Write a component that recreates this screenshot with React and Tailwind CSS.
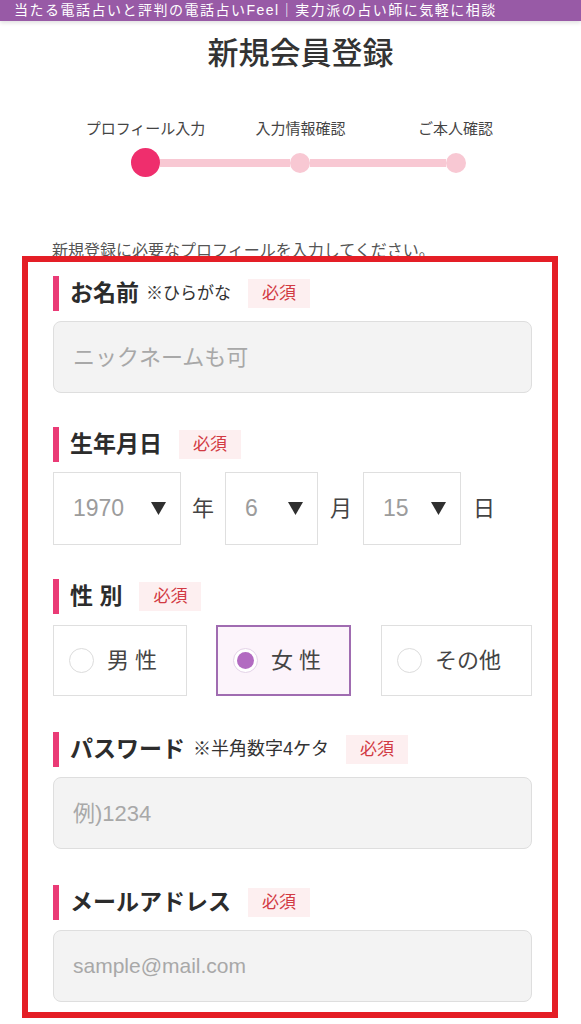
import React from "react";

function Badge() {
  return (
    <span className="ml-[17px] inline-flex h-[29px] items-center bg-[#fdeff0] px-[14px] text-[17px] text-[#d23a43]">
      必須
    </span>
  );
}

function Label({ title, sub, subClass = "text-[17px] ml-[7px]" }) {
  return (
    <div className="flex h-[35px] items-center">
      <div className="h-[35px] w-[6px] bg-[#ea3b76]" />
      <span className="ml-[11px] text-[23px] font-bold text-[#2c2c2c]">{title}</span>
      {sub && <span className={"text-[#333] " + subClass}>{sub}</span>}
      <Badge />
    </div>
  );
}

function TextBox({ placeholder, latin }) {
  return (
    <div className="mt-[10px] flex h-[72px] w-[479px] items-center rounded-[8px] border border-[#dedede] bg-[#f3f3f3] pl-[19px]">
      <span className={"text-[#a8a8a8] " + (latin ? "text-[21px]" : "text-[22px]")}>{placeholder}</span>
    </div>
  );
}

function Tri() {
  return (
    <svg width="15" height="13" viewBox="0 0 15 13">
      <polygon points="0,0 15,0 7.5,13" fill="#2f2f2f" />
    </svg>
  );
}

function Select({ value, w }) {
  return (
    <div className={"flex h-[73px] items-center justify-between border border-[#dfdfdf] bg-white pl-[19px] pr-[14px] " + w}>
      <span className="text-[23px] text-[#9c9c9c]">{value}</span>
      <Tri />
    </div>
  );
}

function Radio({ label, selected, w }) {
  return (
    <div
      className={
        "flex h-[71px] items-center pl-[15px] " +
        w +
        (selected ? " border-2 border-[#a06cb1] bg-[#fcf4fb]" : " border border-[#dfdfdf] bg-white")
      }
    >
      {selected ? (
        <div className="flex h-[25px] w-[25px] items-center justify-center rounded-full border border-[#e4d3e8] bg-white">
          <div className="h-[17px] w-[17px] rounded-full bg-[#b26bc1]" />
        </div>
      ) : (
        <div className="h-[25px] w-[25px] rounded-full border-[1.5px] border-[#dcdcdc] bg-white" />
      )}
      <span className="ml-[13px] text-[22px] text-[#444]">{label}</span>
    </div>
  );
}

export default function App() {
  return (
    <div className="relative min-h-[1024px] w-[581px] overflow-hidden bg-white font-['Liberation_Sans','Noto_Sans_CJK_JP',sans-serif]">
      <div className="flex h-[21px] items-center bg-[#985aa6] pl-[14px] text-[14px] tracking-[1.5px] text-white shadow-[0_2px_4px_rgba(0,0,0,0.12)]">
        当たる電話占いと評判の電話占いFeel｜実力派の占い師に気軽に相談
      </div>

      <div className="mt-[13px] pl-[20px] text-center text-[31px] leading-[34px] font-medium text-[#333] font-['Noto_Sans_CJK_JP',serif]">
        新規会員登録
      </div>

      <div className="ml-[68px] mt-[51px] flex text-[15px] leading-[20px] text-[#444]">
        <div className="w-[155px] text-center">プロフィール入力</div>
        <div className="w-[155px] text-center">入力情報確認</div>
        <div className="w-[155px] text-center">ご本人確認</div>
      </div>

      <div className="ml-[131px] mt-[9px] flex items-center">
        <div className="h-[29px] w-[29px] rounded-full bg-[#ef2e6d]" />
        <div className="h-[8px] w-[130px] bg-[#f8c8d3]" />
        <div className="h-[20px] w-[20px] rounded-full bg-[#f8c8d3]" />
        <div className="h-[8px] w-[136px] bg-[#f8c8d3]" />
        <div className="h-[20px] w-[20px] rounded-full bg-[#f8c8d3]" />
      </div>

      <div className="ml-[52px] mt-[64px] text-[16px] leading-[20px] text-[#555]">
        新規登録に必要なプロフィールを入力してください。
      </div>

      <div className="ml-[53px] mt-[15px] flex flex-col">
        <div>
          <Label title="お名前" sub="※ひらがな" />
          <TextBox placeholder="ニックネームも可" />
        </div>

        <div className="mt-[34px]">
          <Label title="生年月日" />
          <div className="mt-[10px] flex items-center">
            <Select value="1970" w="w-[128px]" />
            <span className="ml-[11px] w-[22px] text-[22px] text-[#444]">年</span>
            <div className="ml-[11px]">
              <Select value="6" w="w-[93px]" />
            </div>
            <span className="ml-[12px] w-[22px] text-[22px] text-[#444]">月</span>
            <div className="ml-[11px]">
              <Select value="15" w="w-[98px]" />
            </div>
            <span className="ml-[12px] w-[22px] text-[22px] text-[#444]">日</span>
          </div>
        </div>

        <div className="mt-[34px]">
          <Label title="性 別" />
          <div className="mt-[11px] flex items-center">
            <Radio label="男 性" w="w-[134px]" />
            <div className="ml-[29px]">
              <Radio label="女 性" selected w="w-[135px]" />
            </div>
            <div className="ml-[30px]">
              <Radio label="その他" w="w-[151px]" />
            </div>
          </div>
        </div>

        <div className="mt-[36px]">
          <Label title="パスワード" sub="※半角数字4ケタ" subClass="text-[18px] ml-[8px]" />
          <TextBox placeholder="例)1234" />
        </div>

        <div className="mt-[36px]">
          <Label title="メールアドレス" />
          <div className="mt-[1px]">
            <TextBox placeholder="sample@mail.com" latin />
          </div>
        </div>
      </div>

      <div className="pointer-events-none absolute left-[22px] top-[256px] h-[762px] w-[536px] border-[6px] border-[#e41e26]" />
    </div>
  );
}
